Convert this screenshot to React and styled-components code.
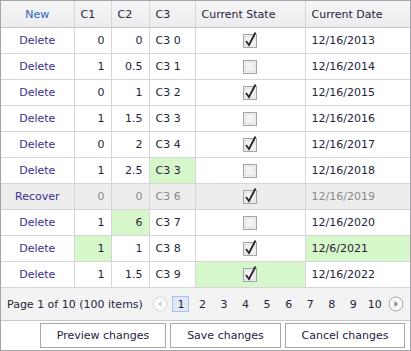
import React from "react";
import styled, { createGlobalStyle } from "styled-components";

const GlobalStyle = createGlobalStyle`
  html, body { margin: 0; padding: 0; background: #fff; }
  body { font-family: "DejaVu Sans", Tahoma, sans-serif; font-size: 11px; }
`;

const colors = {
  text: "#25243a",
  muted: "#8a8a8a",
  link: "#3d2e8e",
  border: "#d6d6da",
  outer: "#a4a4aa",
  changed: "#d6f7c9",
};

const Grid = styled.div`
  width: 411px;
  height: 351px;
  box-sizing: border-box;
  border: 1px solid ${colors.outer};
  display: flex;
  flex-direction: column;
  color: ${colors.text};
`;

const Table = styled.table`
  border-collapse: collapse;
  table-layout: fixed;
  width: 409px;
`;

const HeadCell = styled.th`
  height: 26px;
  padding: 0 6px;
  font-weight: normal;
  text-align: ${(p) => p.$align || "left"};
  color: ${(p) => (p.$link ? "#2a62b8" : colors.text)};
  background: linear-gradient(#f6f6f7, #ececee);
  border-right: 1px solid ${colors.border};
  border-bottom: 1px solid #c6c6cc;
  white-space: nowrap;
  &:last-child { border-right: none; }
`;

const Row = styled.tr`
  background: ${(p) => (p.$deleted ? "#ededed" : "#fff")};
  color: ${(p) => (p.$deleted ? colors.muted : colors.text)};
`;

const Cell = styled.td`
  height: 25px;
  padding: 0 6px;
  text-align: ${(p) => p.$align || "left"};
  background: ${(p) => (p.$changed ? colors.changed : "transparent")};
  border-right: 1px solid ${colors.border};
  border-bottom: 1px solid ${colors.border};
  white-space: nowrap;
  &:last-child { border-right: none; }
`;

const Command = styled.span`
  color: ${colors.link};
`;

const Pager = styled.div`
  height: 32px;
  display: flex;
  align-items: center;
  padding: 0 6px;
  background: #f3f3f4;
  border-bottom: 1px solid #c6c6cc;
`;

const Summary = styled.span`
  margin-right: 9px;
`;

const Pages = styled.div`
  display: flex;
  align-items: center;
  flex: 1;
  justify-content: space-between;
`;

const PageNum = styled.span`
  min-width: 17px;
  height: 16px;
  box-sizing: border-box;
  display: flex;
  align-items: center;
  justify-content: center;
  border: 1px solid ${(p) => (p.$active ? "#a9c1e6" : "transparent")};
  background: ${(p) => (p.$active ? "#dfe8f7" : "transparent")};
`;

const Footer = styled.div`
  flex: 1;
  display: flex;
  justify-content: flex-end;
  align-items: center;
  gap: 4px;
  padding: 0 5px 1px 0;
`;

const Button = styled.button`
  height: 25px;
  width: ${(p) => p.$w}px;
  border: 1px solid #a7a7a7;
  background: #fff;
  font-family: inherit;
  font-size: 11px;
  color: ${colors.text};
  padding: 0;
`;

const CheckBox = styled.svg`
  display: block;
  margin: -2px auto 0;
  overflow: visible;
`;

const Arrow = ({ dir, disabled }) => (
  <svg width="16" height="16" viewBox="0 0 16 16">
    <circle cx="8" cy="8" r="7" fill="#fafafa" stroke={disabled ? "#d4d4d4" : "#a9a9a9"} />
    <path
      d={dir === "left" ? "M9.5 5 L6 8 L9.5 11 Z" : "M6.5 5 L10 8 L6.5 11 Z"}
      fill={disabled ? "#d0d0d0" : "#888"}
    />
  </svg>
);

const Check = ({ checked }) => (
  <CheckBox width="14" height="16" viewBox="0 0 14 16">
    <rect x="0.5" y="2.5" width="13" height="13" fill="#fff" stroke="#a3a3a8" />
    <rect x="2" y="4" width="10" height="10" fill="#f3f3f3" stroke="#dadadd" strokeWidth="1" />
    {checked && (
      <path d="M3 9 L6 13 L12.5 0.5" fill="none" stroke="#26262e" strokeWidth="1.8" />
    )}
  </CheckBox>
);

const rows = [
  { c1: 0, c2: "0", c3: "C3 0", s: true, d: "12/16/2013" },
  { c1: 1, c2: "0.5", c3: "C3 1", s: false, d: "12/16/2014" },
  { c1: 0, c2: "1", c3: "C3 2", s: true, d: "12/16/2015" },
  { c1: 1, c2: "1.5", c3: "C3 3", s: false, d: "12/16/2016" },
  { c1: 0, c2: "2", c3: "C3 4", s: true, d: "12/16/2017" },
  { c1: 1, c2: "2.5", c3: "C3 3", s: false, d: "12/16/2018", ch: ["c3"] },
  { c1: 0, c2: "0", c3: "C3 6", s: true, d: "12/16/2019", deleted: true },
  { c1: 1, c2: "6", c3: "C3 7", s: false, d: "12/16/2020", ch: ["c2"] },
  { c1: 1, c2: "1", c3: "C3 8", s: true, d: "12/6/2021", ch: ["c1", "d"] },
  { c1: 1, c2: "1.5", c3: "C3 9", s: true, d: "12/16/2022", ch: ["s"] },
];

const App = () => {
  const has = (r, k) => (r.ch || []).includes(k);
  return (
    <>
      <GlobalStyle />
      <Grid>
        <Table>
          <colgroup>
            <col style={{ width: 73 }} />
            <col style={{ width: 37 }} />
            <col style={{ width: 38 }} />
            <col style={{ width: 46 }} />
            <col style={{ width: 110 }} />
            <col style={{ width: 105 }} />
          </colgroup>
          <thead>
            <tr>
              <HeadCell $align="center" $link>New</HeadCell>
              <HeadCell>C1</HeadCell>
              <HeadCell>C2</HeadCell>
              <HeadCell>C3</HeadCell>
              <HeadCell>Current State</HeadCell>
              <HeadCell>Current Date</HeadCell>
            </tr>
          </thead>
          <tbody>
            {rows.map((r, i) => (
              <Row key={i} $deleted={r.deleted}>
                <Cell $align="center">
                  <Command>{r.deleted ? "Recover" : "Delete"}</Command>
                </Cell>
                <Cell $align="right" $changed={has(r, "c1")}>{r.c1}</Cell>
                <Cell $align="right" $changed={has(r, "c2")}>{r.c2}</Cell>
                <Cell $changed={has(r, "c3")}>{r.c3}</Cell>
                <Cell $changed={has(r, "s")}>
                  <Check checked={r.s} />
                </Cell>
                <Cell $changed={has(r, "d")}>{r.d}</Cell>
              </Row>
            ))}
          </tbody>
        </Table>
        <Pager>
          <Summary>Page 1 of 10 (100 items)</Summary>
          <Pages>
            <Arrow dir="left" disabled />
            {[1, 2, 3, 4, 5, 6, 7, 8, 9, 10].map((n) => (
              <PageNum key={n} $active={n === 1}>{n}</PageNum>
            ))}
            <Arrow dir="right" />
          </Pages>
        </Pager>
        <Footer>
          <Button $w={126}>Preview changes</Button>
          <Button $w={111}>Save changes</Button>
          <Button $w={120}>Cancel changes</Button>
        </Footer>
      </Grid>
    </>
  );
};

export default App;
